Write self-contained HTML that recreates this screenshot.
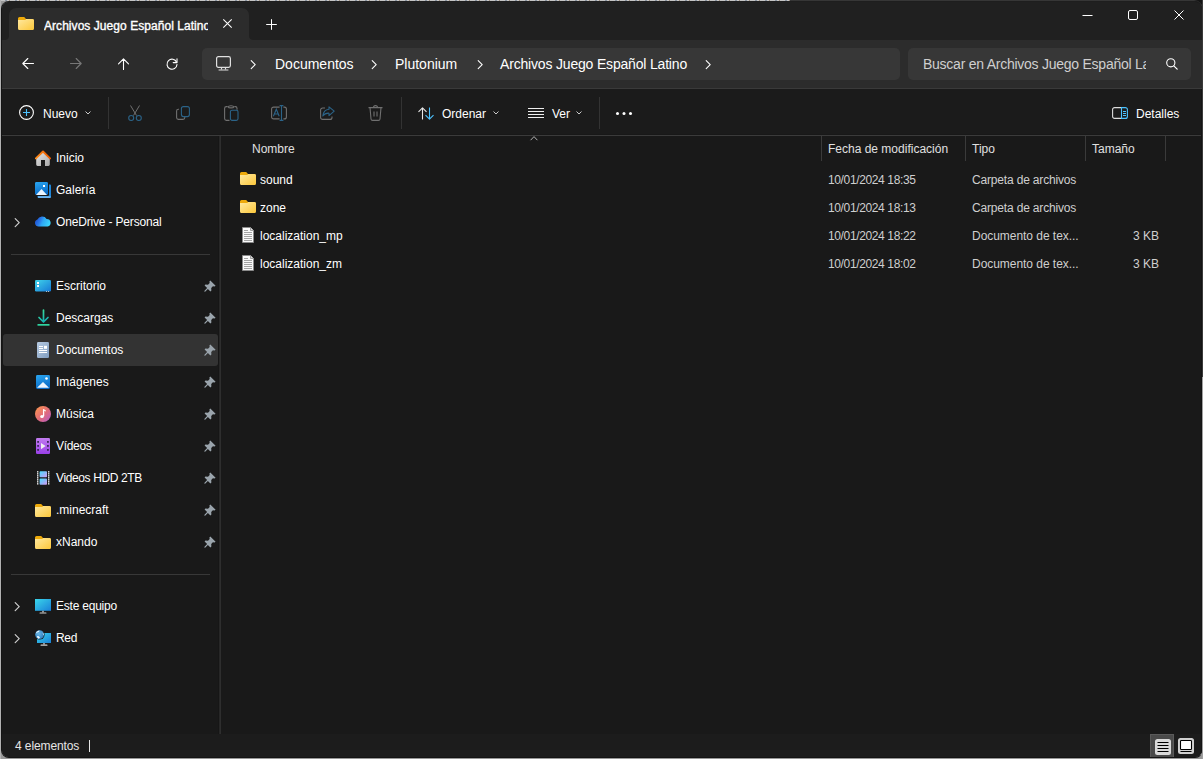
<!DOCTYPE html>
<html><head><meta charset="utf-8">
<style>
*{margin:0;padding:0;box-sizing:border-box}
html,body{width:1203px;height:759px;overflow:hidden;background:#989898;font-family:"Liberation Sans",sans-serif;color:#fff}
.a{position:absolute}
svg{position:absolute;overflow:visible}
#win{position:absolute;left:1px;top:1px;width:1202px;height:757px;border-radius:8px;overflow:hidden;background:#202020;background-clip:padding-box;border:1px solid #141414;border-top-color:#1e1e1e;border-right-color:transparent}
#pg{position:absolute;left:-2px;top:-2px;width:1203px;height:759px}
.t12{position:absolute;font-size:12px;line-height:14px;white-space:nowrap}
.t14{position:absolute;font-size:14px;line-height:16px;white-space:nowrap}
</style></head>
<body>
<div class="a" style="left:0;top:0;width:790px;height:1px;background:repeating-linear-gradient(90deg,#c4c4c4 0 5px,#8c96a4 5px 7px,#c8c8c8 7px 9px,#a09080 9px 10px)"></div>
<div class="a" style="left:790px;top:0;width:413px;height:1px;background:#363636"></div>
<div class="a" style="left:1150px;top:0;width:53px;height:30px;background:#141414"></div><div class="a" style="left:1150px;top:0;width:53px;height:30px;background:#141414;border-top:1px solid #363636;border-right:1px solid #3a3a3a;border-top-right-radius:9px"></div>
<div class="a" style="left:1202px;top:0;width:1px;height:377px;background:#3a3a3a"></div>
<div class="a" style="left:1202px;top:377px;width:1px;height:382px;background:#a0a0a0"></div>
<div class="a" style="left:0;top:0;width:1px;height:759px;background:#b2b2b2"></div>
<div id="win"><div id="pg">
<!-- title bar -->
<div class="a" style="left:0;top:0;width:1203px;height:40px;background:#202020"></div>
<!-- tab -->
<div class="a" style="left:9px;top:8px;width:240px;height:34px;background:#2c2c2c;border-radius:7px 7px 0 0"></div>
<!-- address row -->
<div class="a" style="left:0;top:40px;width:1203px;height:48px;background:#2c2c2c"></div>
<div class="a" style="left:0;top:88px;width:1203px;height:1px;background:#3a3a3a"></div>
<!-- command bar -->
<div class="a" style="left:0;top:89px;width:1203px;height:46px;background:#1b1b1b"></div>
<div class="a" style="left:0;top:134px;width:1203px;height:1px;background:#181818"></div><div class="a" style="left:0;top:135px;width:1203px;height:1px;background:#3b3b3b"></div>
<!-- body -->
<div class="a" style="left:0;top:136px;width:1203px;height:598px;background:#191919"></div>
<div class="a" style="left:218px;top:136px;width:1px;height:598px;background:#161616"></div><div class="a" style="left:219px;top:136px;width:1px;height:598px;background:#272727"></div><div class="a" style="left:220px;top:136px;width:1px;height:598px;background:#2e2e2e"></div>
<!-- status -->
<div class="a" style="left:0;top:734px;width:1203px;height:25px;background:#1c1c1c"></div>


<!-- tab flares -->
<div class="a" style="left:5px;top:36px;width:4px;height:4px;background:radial-gradient(circle 4px at 0 0,#202020 3.5px,#2c2c2c 4.5px)"></div>
<div class="a" style="left:249px;top:36px;width:4px;height:4px;background:radial-gradient(circle 4px at 100% 0,#202020 3.5px,#2c2c2c 4.5px)"></div>
<!-- tab folder icon -->
<svg style="left:18px;top:17px" width="16" height="13" viewBox="0 0 16 13">
 <defs><linearGradient id="fg" x1="0" y1="0" x2="1" y2="1"><stop offset="0" stop-color="#ffe9a0"/><stop offset="1" stop-color="#fcc73a"/></linearGradient></defs>
 <path d="M1.5 0H6.2L8 2H14.5A1.5 1.5 0 0 1 16 3.5V6H0V1.5A1.5 1.5 0 0 1 1.5 0Z" fill="#eeaa0a"/>
 <path d="M0 3H7.2L8.2 2H14.5A1.5 1.5 0 0 1 16 3.5V11.5A1.5 1.5 0 0 1 14.5 13H1.5A1.5 1.5 0 0 1 0 11.5Z" fill="url(#fg)"/>
</svg>
<div class="t12" style="left:44px;top:19px;width:164px;overflow:hidden;color:#fff;-webkit-text-stroke:0.35px #fff;letter-spacing:0.05px">Archivos Juego Español Latino</div>
<!-- tab close -->
<svg style="left:223px;top:19px" width="9" height="9" viewBox="0 0 9 9"><path d="M0.3 0.3L8.7 8.7M8.7 0.3L0.3 8.7" stroke="#fff" stroke-width="1.05"/></svg>
<!-- new tab -->
<svg style="left:266px;top:19px" width="11" height="11" viewBox="0 0 11 11"><path d="M5.5 0.2V10.8M0.2 5.5H10.8" stroke="#fff" stroke-width="1"/></svg>
<!-- window controls -->
<svg style="left:1082px;top:14px" width="11" height="3" viewBox="0 0 11 3"><path d="M0.5 1.5H10.5" stroke="#fff" stroke-width="1"/></svg>
<svg style="left:1128px;top:10px" width="10" height="10" viewBox="0 0 10 10"><rect x="0.5" y="0.5" width="9" height="9" rx="1.5" fill="none" stroke="#fff" stroke-width="1"/></svg>
<svg style="left:1174px;top:10px" width="10" height="10" viewBox="0 0 10 10"><path d="M0.5 0.5L9.5 9.5M9.5 0.5L0.5 9.5" stroke="#fff" stroke-width="1"/></svg>

<!-- nav buttons -->
<svg style="left:22px;top:58px" width="12" height="12" viewBox="0 0 12 12"><path d="M11.5 5.5H0.8M5.8 0.5L0.8 5.5L5.8 10.5" fill="none" stroke="#fff" stroke-width="1.1" stroke-linecap="round" stroke-linejoin="round"/></svg>
<svg style="left:70px;top:58px" width="12" height="12" viewBox="0 0 12 12"><path d="M0.5 5.5H11.2M6.2 0.5L11.2 5.5L6.2 10.5" fill="none" stroke="#777" stroke-width="1.1" stroke-linecap="round" stroke-linejoin="round"/></svg>
<svg style="left:118px;top:58px" width="12" height="12" viewBox="0 0 12 12"><path d="M5.5 11.5V0.8M0.5 5.8L5.5 0.8L10.5 5.8" fill="none" stroke="#fff" stroke-width="1.1" stroke-linecap="round" stroke-linejoin="round"/></svg>
<svg style="left:166px;top:58px" width="12" height="12" viewBox="0 0 12 12"><path d="M10.6 4.2A5 5 0 1 0 11 6.5" fill="none" stroke="#fff" stroke-width="1.1" stroke-linecap="round"/><path d="M11 0.8V4.6H7.2" fill="none" stroke="#fff" stroke-width="1.1" stroke-linecap="round" stroke-linejoin="round"/></svg>

<div class="a" style="left:1201px;top:89px;width:1px;height:670px;background:#141414"></div>
<!-- breadcrumb & search -->
<div class="a" style="left:202px;top:48px;width:698px;height:32px;background:#373737;border-radius:5px"></div>
<div class="a" style="left:908px;top:48px;width:283px;height:32px;background:#373737;border-radius:5px"></div>


<!-- breadcrumb contents -->
<svg style="left:216px;top:56px" width="15" height="15" viewBox="0 0 15 15"><rect x="0.6" y="0.6" width="13.8" height="10.8" rx="1.8" fill="none" stroke="#e0e0e0" stroke-width="1.2"/><path d="M5.5 11.5V13.2M9.5 11.5V13.2M2.6 14H12.4" stroke="#e0e0e0" stroke-width="1.2"/></svg>
<svg style="left:250px;top:60px" width="7" height="10" viewBox="0 0 7 10"><path d="M1.2 0.6L5.2 4.6L1.2 8.6" fill="none" stroke="#fff" stroke-width="1.1" stroke-linecap="round" stroke-linejoin="round"/></svg>
<div class="t14" style="left:275px;top:56px">Documentos</div>
<svg style="left:371px;top:60px" width="7" height="10" viewBox="0 0 7 10"><path d="M1.2 0.6L5.2 4.6L1.2 8.6" fill="none" stroke="#fff" stroke-width="1.1" stroke-linecap="round" stroke-linejoin="round"/></svg>
<div class="t14" style="left:395px;top:56px">Plutonium</div>
<svg style="left:477px;top:60px" width="7" height="10" viewBox="0 0 7 10"><path d="M1.2 0.6L5.2 4.6L1.2 8.6" fill="none" stroke="#fff" stroke-width="1.1" stroke-linecap="round" stroke-linejoin="round"/></svg>
<div class="t14" style="left:500px;top:56px;letter-spacing:-0.18px">Archivos Juego Español Latino</div>
<svg style="left:705px;top:60px" width="7" height="10" viewBox="0 0 7 10"><path d="M1.2 0.6L5.2 4.6L1.2 8.6" fill="none" stroke="#fff" stroke-width="1.1" stroke-linecap="round" stroke-linejoin="round"/></svg>
<!-- search -->
<div class="t14" style="left:923px;top:56px;width:223px;overflow:hidden;color:#cfcfcf;letter-spacing:-0.25px">Buscar en Archivos Juego Español Latino</div>
<svg style="left:1166px;top:58px" width="12" height="12" viewBox="0 0 12 12"><circle cx="4.8" cy="4.8" r="4.1" fill="none" stroke="#fff" stroke-width="1.1"/><path d="M7.8 7.8L11.2 11.2" stroke="#fff" stroke-width="1.2" stroke-linecap="round"/></svg>

<!-- command bar -->
<svg style="left:19px;top:105px" width="15" height="15" viewBox="0 0 15 15"><circle cx="7.5" cy="7.5" r="6.9" fill="none" stroke="#fff" stroke-width="1.1"/><path d="M7.5 4V11M4 7.5H11" stroke="#4cc2ff" stroke-width="1.1"/></svg>
<div class="t12" style="left:43px;top:107px">Nuevo</div>
<svg style="left:85px;top:111px" width="6" height="4" viewBox="0 0 6 4"><path d="M0.5 0.5L3 3L5.5 0.5" fill="none" stroke="#ccc" stroke-width="1"/></svg>
<div class="a" style="left:108px;top:97px;width:1px;height:32px;background:#333"></div>
<!-- cut -->
<svg style="left:128px;top:105px" width="14" height="16" viewBox="0 0 14 16"><path d="M2.5 0.5L8.5 10.5M11.5 0.5L5.5 10.5" stroke="#707070" stroke-width="1"/><circle cx="3.2" cy="13" r="2.5" fill="none" stroke="#2b6388" stroke-width="1.1"/><circle cx="10.8" cy="13" r="2.5" fill="none" stroke="#2b6388" stroke-width="1.1"/></svg>
<!-- copy -->
<svg style="left:176px;top:106px" width="14" height="14" viewBox="0 0 14 14"><path d="M3 3.2H2.4A1.8 1.8 0 0 0 0.6 5V11.6A1.8 1.8 0 0 0 2.4 13.4H7A1.8 1.8 0 0 0 8.8 11.6V11" fill="none" stroke="#707070" stroke-width="1.1"/><rect x="5.4" y="0.6" width="8" height="10" rx="2" fill="none" stroke="#2b6388" stroke-width="1.1"/></svg>
<!-- paste -->
<svg style="left:224px;top:105px" width="15" height="16" viewBox="0 0 15 16"><path d="M3.6 1.6H2.4A1.8 1.8 0 0 0 0.6 3.4V13.6A1.8 1.8 0 0 0 2.4 15.4H5.5M10.4 1.6H11.4A1.6 1.6 0 0 1 13 3.2V4.8M4.2 1.8C4.4 0.4 9.6 0.4 9.8 1.8C9.6 3.2 4.4 3.2 4.2 1.8Z" fill="none" stroke="#707070" stroke-width="1.1"/><rect x="6.4" y="5.2" width="7.6" height="10.2" rx="1.6" fill="none" stroke="#2b6388" stroke-width="1.1"/></svg>
<!-- rename -->
<svg style="left:271px;top:105px" width="16" height="16" viewBox="0 0 16 16"><path d="M8.6 2.1H2.6A2 2 0 0 0 0.6 4.1V11.9A2 2 0 0 0 2.6 13.9H8.6M12.4 2.1H13.4A2 2 0 0 1 15.4 4.1V11.9A2 2 0 0 1 13.4 13.9H12.4" fill="none" stroke="#707070" stroke-width="1.1"/><path d="M10.5 0.6V15.4M8.6 0.6H12.4M8.6 15.4H12.4M2.4 11.2L5.3 4.2L8.2 11.2M3.3 9H7.3" fill="none" stroke="#2b6388" stroke-width="1.1"/></svg>
<!-- share -->
<svg style="left:320px;top:106px" width="15" height="14" viewBox="0 0 15 14"><path d="M5 2H2.6A2 2 0 0 0 0.6 4V11.4A2 2 0 0 0 2.6 13.4H10A2 2 0 0 0 12 11.4V10.5" fill="none" stroke="#707070" stroke-width="1.1"/><path d="M9 0.8L14.2 5.2L9 9.6V7.2C6.2 7 4.2 8 2.8 10C3.2 6.5 5.5 3.6 9 3.3Z" fill="none" stroke="#2b6388" stroke-width="1.1" stroke-linejoin="round"/></svg>
<!-- delete -->
<svg style="left:368px;top:105px" width="15" height="16" viewBox="0 0 15 16"><path d="M0.5 2.6H14.5M5.5 2.6A2 2 0 0 1 9.5 2.6M2 2.6L3 14A1.6 1.6 0 0 0 4.6 15.4H10.4A1.6 1.6 0 0 0 12 14L13 2.6M6 6.5V11.5M9 6.5V11.5" fill="none" stroke="#707070" stroke-width="1.1"/></svg>
<div class="a" style="left:401px;top:97px;width:1px;height:32px;background:#333"></div>
<!-- sort -->
<svg style="left:418px;top:107px" width="16" height="13" viewBox="0 0 16 13"><path d="M4.5 12.5V0.8M0.5 4.8L4.5 0.8L8.5 4.8" fill="none" stroke="#e8e8e8" stroke-width="1.1" stroke-linejoin="round"/><path d="M11.5 0.5V12.2M7.5 8.2L11.5 12.2L15.5 8.2" fill="none" stroke="#4cc2ff" stroke-width="1.1" stroke-linejoin="round"/></svg>
<div class="t12" style="left:442px;top:107px">Ordenar</div>
<svg style="left:493px;top:111px" width="6" height="4" viewBox="0 0 6 4"><path d="M0.5 0.5L3 3L5.5 0.5" fill="none" stroke="#ccc" stroke-width="1"/></svg>
<!-- view -->
<svg style="left:528px;top:108px" width="16" height="11" viewBox="0 0 16 11"><path d="M0 0.5H16M0 3.5H16M0 6.5H16M0 9.5H16" stroke="#eee" stroke-width="1"/></svg>
<div class="t12" style="left:552px;top:107px">Ver</div>
<svg style="left:576px;top:111px" width="6" height="4" viewBox="0 0 6 4"><path d="M0.5 0.5L3 3L5.5 0.5" fill="none" stroke="#ccc" stroke-width="1"/></svg>
<div class="a" style="left:599px;top:97px;width:1px;height:32px;background:#333"></div>
<svg style="left:616px;top:112px" width="16" height="3" viewBox="0 0 16 3"><circle cx="1.5" cy="1.5" r="1.5" fill="#fff"/><circle cx="8" cy="1.5" r="1.5" fill="#fff"/><circle cx="14.5" cy="1.5" r="1.5" fill="#fff"/></svg>
<!-- details -->
<svg style="left:1112px;top:107px" width="16" height="12" viewBox="0 0 16 12"><path d="M9.5 0.6H2.6A2 2 0 0 0 0.6 2.6V9.4A2 2 0 0 0 2.6 11.4H9.5" fill="none" stroke="#ddd" stroke-width="1.1"/><path d="M9.5 0.6H13.4A2 2 0 0 1 15.4 2.6V9.4A2 2 0 0 1 13.4 11.4H9.5Z" fill="none" stroke="#4cc2ff" stroke-width="1.1"/><path d="M11 4.5H14M11 6.5H14M11 8.5H14" stroke="#4cc2ff" stroke-width="1"/></svg>
<div class="t12" style="left:1136px;top:107px">Detalles</div>


<!-- NAV PANE -->
<div class="a" style="left:3px;top:334px;width:215px;height:32px;background:#333333;border-radius:3px"></div>
<svg style="left:35px;top:150px" width="16" height="16" viewBox="0 0 16 16"><defs><linearGradient id="hb" x1="0" y1="0" x2="1" y2="1"><stop offset="0" stop-color="#e6e6e6"/><stop offset="1" stop-color="#a8a8a8"/></linearGradient><linearGradient id="hr" x1="0" y1="0" x2="1" y2="0"><stop offset="0" stop-color="#ff8c1a"/><stop offset="1" stop-color="#e85a00"/></linearGradient></defs>
<path d="M1.2 8.2L8 2.2L14.8 8.2V14.6A1.4 1.4 0 0 1 13.4 16H10V10H6V16H2.6A1.4 1.4 0 0 1 1.2 14.6Z" fill="url(#hb)"/>
<path d="M0.9 8.4L8 1.5L15.1 8.4" fill="none" stroke="url(#hr)" stroke-width="1.9" stroke-linecap="round" stroke-linejoin="round"/></svg>
<div class="t12" style="left:56px;top:151px">Inicio</div><svg style="left:35px;top:182px" width="16" height="16" viewBox="0 0 16 16"><defs><linearGradient id="gb" x1="0" y1="0" x2="0.3" y2="1"><stop offset="0" stop-color="#2aa6f0"/><stop offset="1" stop-color="#0a6cc8"/></linearGradient></defs>
<path d="M14 2.5H15A1 1 0 0 1 16 3.5V15A1 1 0 0 1 15 16H3.5A1 1 0 0 1 2.5 15V14H13A1 1 0 0 0 14 13Z" fill="#1f86d8"/>
<path d="M3 14.3H15.6V15.2A0.8 0.8 0 0 1 14.8 16H3.8A0.8 0.8 0 0 1 3 15.2Z" fill="#6fb4ee"/>
<rect x="0" y="0" width="13" height="13" rx="1.4" fill="url(#gb)"/>
<path d="M1 13L6.5 7L12 13Z" fill="#e8f4ff"/><rect x="8" y="3" width="2" height="2" fill="#fff"/></svg>
<div class="t12" style="left:56px;top:183px">Galería</div><svg style="left:14px;top:218px" width="7" height="10" viewBox="0 0 7 10"><path d="M1.2 0.6L5.2 4.6L1.2 8.6" fill="none" stroke="#d0d0d0" stroke-width="1.2" stroke-linecap="round" stroke-linejoin="round"/></svg><svg style="left:35px;top:215px" width="16" height="12" viewBox="0 0 16 12"><defs><linearGradient id="od" x1="0" y1="0.2" x2="1" y2="0.5"><stop offset="0" stop-color="#1a48c8"/><stop offset="0.35" stop-color="#2a78e8"/><stop offset="0.55" stop-color="#2ea8f4"/><stop offset="1" stop-color="#3ad4fa"/></linearGradient></defs>
<path d="M3.6 11.6A3.6 3.6 0 0 1 2.4 4.6A5.2 5.2 0 0 1 11.6 3.9A3.9 3.9 0 0 1 12.6 11.6Z" fill="url(#od)"/></svg>
<div class="t12" style="left:56px;top:215px;letter-spacing:-0.17px">OneDrive - Personal</div><div class="a" style="left:11px;top:254px;width:199px;height:1px;background:#383838"></div>
<svg style="left:35px;top:280px" width="16" height="12" viewBox="0 0 16 12"><defs><linearGradient id="dk" x1="0" y1="0" x2="1" y2="1"><stop offset="0" stop-color="#40d4ea"/><stop offset="1" stop-color="#1678d6"/></linearGradient></defs>
<rect x="0" y="0" width="16" height="11.5" rx="1.3" fill="url(#dk)"/><rect x="2" y="2" width="2" height="2" fill="#fff"/><rect x="2" y="5" width="2" height="2" fill="#fff"/><rect x="11" y="11.2" width="1" height="0.8" fill="#ddd"/><rect x="13" y="11.2" width="1" height="0.8" fill="#ddd"/></svg>
<div class="t12" style="left:56px;top:279px">Escritorio</div><svg style="left:204px;top:280px" width="12" height="12" viewBox="0 0 12 12"><path d="M6.3 0.4L11.6 5.7L10.6 6.6L8.9 6.3L7.2 8L7.4 10.6L6.4 11.4L3.9 8.9L1.1 11.7L0.3 11.6L0.3 10.9L3.1 8.1L0.6 5.6L1.4 4.6L4 4.8L5.7 3.1L5.4 1.4Z" fill="#9aa4ac"/></svg><svg style="left:37px;top:309px" width="13" height="17" viewBox="0 0 13 17"><defs><linearGradient id="dl" x1="0" y1="0" x2="0.4" y2="1"><stop offset="0" stop-color="#3fe39a"/><stop offset="1" stop-color="#16b0b0"/></linearGradient></defs>
<path d="M6.5 1V12.5M2 8.5L6.5 13L11 8.5" fill="none" stroke="url(#dl)" stroke-width="1.7" stroke-linecap="round" stroke-linejoin="round"/><rect x="0.5" y="15" width="12" height="1.7" fill="#2fd3a0"/></svg>
<div class="t12" style="left:56px;top:311px">Descargas</div><svg style="left:204px;top:312px" width="12" height="12" viewBox="0 0 12 12"><path d="M6.3 0.4L11.6 5.7L10.6 6.6L8.9 6.3L7.2 8L7.4 10.6L6.4 11.4L3.9 8.9L1.1 11.7L0.3 11.6L0.3 10.9L3.1 8.1L0.6 5.6L1.4 4.6L4 4.8L5.7 3.1L5.4 1.4Z" fill="#9aa4ac"/></svg><svg style="left:37px;top:342px" width="12" height="16" viewBox="0 0 12 16"><defs><linearGradient id="dc" x1="0" y1="0" x2="1" y2="1"><stop offset="0" stop-color="#b8cbe2"/><stop offset="1" stop-color="#7f9dc0"/></linearGradient></defs>
<rect x="0" y="0" width="12" height="16" rx="1.2" fill="url(#dc)"/><path d="M2 4.5H6M2 6.5H6M2 8.5H10M2 10.5H10" stroke="#fff" stroke-width="1"/><rect x="7" y="3.8" width="3" height="3" fill="#fff"/></svg>
<div class="t12" style="left:56px;top:343px">Documentos</div><svg style="left:204px;top:344px" width="12" height="12" viewBox="0 0 12 12"><path d="M6.3 0.4L11.6 5.7L10.6 6.6L8.9 6.3L7.2 8L7.4 10.6L6.4 11.4L3.9 8.9L1.1 11.7L0.3 11.6L0.3 10.9L3.1 8.1L0.6 5.6L1.4 4.6L4 4.8L5.7 3.1L5.4 1.4Z" fill="#9aa4ac"/></svg><svg style="left:36px;top:375px" width="14" height="14" viewBox="0 0 14 14"><defs><linearGradient id="im" x1="0" y1="0" x2="0.3" y2="1"><stop offset="0" stop-color="#2aa6f0"/><stop offset="1" stop-color="#0a6cc8"/></linearGradient></defs>
<rect x="0" y="0" width="14" height="14" rx="1.4" fill="url(#im)"/><path d="M1 12.8L7 7L13 12.8Z" fill="#eaf5ff"/><circle cx="10.5" cy="3.5" r="1.3" fill="#fff"/></svg>
<div class="t12" style="left:56px;top:375px">Imágenes</div><svg style="left:204px;top:376px" width="12" height="12" viewBox="0 0 12 12"><path d="M6.3 0.4L11.6 5.7L10.6 6.6L8.9 6.3L7.2 8L7.4 10.6L6.4 11.4L3.9 8.9L1.1 11.7L0.3 11.6L0.3 10.9L3.1 8.1L0.6 5.6L1.4 4.6L4 4.8L5.7 3.1L5.4 1.4Z" fill="#9aa4ac"/></svg><svg style="left:35px;top:406px" width="16" height="16" viewBox="0 0 16 16"><defs><linearGradient id="mu" x1="0" y1="0" x2="1" y2="1"><stop offset="0" stop-color="#ff9a4a"/><stop offset="0.55" stop-color="#e06a7a"/><stop offset="1" stop-color="#b05ad0"/></linearGradient></defs>
<circle cx="8" cy="8" r="8" fill="url(#mu)"/><path d="M8.6 3.2V10.2" stroke="#fff" stroke-width="1.3"/><path d="M8.6 3.2L10.9 4.4V5.6L8.6 4.6Z" fill="#fff"/><ellipse cx="7" cy="10.6" rx="1.8" ry="1.5" fill="#fff"/></svg>
<div class="t12" style="left:56px;top:407px">Música</div><svg style="left:204px;top:408px" width="12" height="12" viewBox="0 0 12 12"><path d="M6.3 0.4L11.6 5.7L10.6 6.6L8.9 6.3L7.2 8L7.4 10.6L6.4 11.4L3.9 8.9L1.1 11.7L0.3 11.6L0.3 10.9L3.1 8.1L0.6 5.6L1.4 4.6L4 4.8L5.7 3.1L5.4 1.4Z" fill="#9aa4ac"/></svg><svg style="left:36px;top:438px" width="14" height="16" viewBox="0 0 14 16"><defs><linearGradient id="vi" x1="0" y1="0" x2="0" y2="1"><stop offset="0" stop-color="#c27cf0"/><stop offset="1" stop-color="#9a40e8"/></linearGradient></defs>
<rect x="0" y="0" width="14" height="16" rx="1.2" fill="url(#vi)"/><rect x="1.2" y="3" width="1.8" height="1.8" fill="#3a2a58"/><rect x="1.2" y="7" width="1.8" height="1.8" fill="#3a2a58"/><rect x="1.2" y="11" width="1.8" height="1.8" fill="#3a2a58"/><rect x="11" y="3" width="1.8" height="1.8" fill="#3a2a58"/><rect x="11" y="7" width="1.8" height="1.8" fill="#3a2a58"/><rect x="11" y="11" width="1.8" height="1.8" fill="#3a2a58"/><path d="M5 5L9.6 8L5 11.2Z" fill="#f0f0f0"/></svg>
<div class="t12" style="left:56px;top:439px;letter-spacing:-0.3px">Vídeos</div><svg style="left:204px;top:440px" width="12" height="12" viewBox="0 0 12 12"><path d="M6.3 0.4L11.6 5.7L10.6 6.6L8.9 6.3L7.2 8L7.4 10.6L6.4 11.4L3.9 8.9L1.1 11.7L0.3 11.6L0.3 10.9L3.1 8.1L0.6 5.6L1.4 4.6L4 4.8L5.7 3.1L5.4 1.4Z" fill="#9aa4ac"/></svg><svg style="left:37px;top:471px" width="13" height="14" viewBox="0 0 13 14"><defs><linearGradient id="fs" x1="0" y1="0" x2="1" y2="1"><stop offset="0" stop-color="#4ae0ff"/><stop offset="0.5" stop-color="#8ab8f8"/><stop offset="1" stop-color="#d69af0"/></linearGradient></defs>
<rect x="0" y="0.2" width="1.4" height="1.3" fill="#fff"/><rect x="11" y="0.2" width="1.4" height="1.3" fill="#fff"/><rect x="0" y="2.2" width="1.4" height="1.3" fill="#fff"/><rect x="11" y="2.2" width="1.4" height="1.3" fill="#fff"/><rect x="0" y="4.2" width="1.4" height="1.3" fill="#fff"/><rect x="11" y="4.2" width="1.4" height="1.3" fill="#fff"/><rect x="0" y="6.2" width="1.4" height="1.3" fill="#fff"/><rect x="11" y="6.2" width="1.4" height="1.3" fill="#fff"/><rect x="0" y="8.2" width="1.4" height="1.3" fill="#fff"/><rect x="11" y="8.2" width="1.4" height="1.3" fill="#fff"/><rect x="0" y="10.2" width="1.4" height="1.3" fill="#fff"/><rect x="11" y="10.2" width="1.4" height="1.3" fill="#fff"/><rect x="0" y="12.2" width="1.4" height="1.3" fill="#fff"/><rect x="11" y="12.2" width="1.4" height="1.3" fill="#fff"/><rect x="2.6" y="0.3" width="7.4" height="6" rx="0.8" fill="url(#fs)"/><rect x="2.6" y="7.6" width="7.4" height="6.2" rx="0.8" fill="url(#fs)"/></svg>
<div class="t12" style="left:56px;top:471px;letter-spacing:-0.38px">Videos HDD 2TB</div><svg style="left:204px;top:472px" width="12" height="12" viewBox="0 0 12 12"><path d="M6.3 0.4L11.6 5.7L10.6 6.6L8.9 6.3L7.2 8L7.4 10.6L6.4 11.4L3.9 8.9L1.1 11.7L0.3 11.6L0.3 10.9L3.1 8.1L0.6 5.6L1.4 4.6L4 4.8L5.7 3.1L5.4 1.4Z" fill="#9aa4ac"/></svg><svg style="left:35px;top:504px" width="16" height="13" viewBox="0 0 16 13"><path d="M1.5 0H6.2L8 2H14.5A1.5 1.5 0 0 1 16 3.5V6H0V1.5A1.5 1.5 0 0 1 1.5 0Z" fill="#eeaa0a"/><path d="M0 3H7.2L8.2 2H14.5A1.5 1.5 0 0 1 16 3.5V11.5A1.5 1.5 0 0 1 14.5 13H1.5A1.5 1.5 0 0 1 0 11.5Z" fill="url(#fg)"/></svg><div class="t12" style="left:56px;top:503px">.minecraft</div><svg style="left:204px;top:504px" width="12" height="12" viewBox="0 0 12 12"><path d="M6.3 0.4L11.6 5.7L10.6 6.6L8.9 6.3L7.2 8L7.4 10.6L6.4 11.4L3.9 8.9L1.1 11.7L0.3 11.6L0.3 10.9L3.1 8.1L0.6 5.6L1.4 4.6L4 4.8L5.7 3.1L5.4 1.4Z" fill="#9aa4ac"/></svg><svg style="left:35px;top:536px" width="16" height="13" viewBox="0 0 16 13"><path d="M1.5 0H6.2L8 2H14.5A1.5 1.5 0 0 1 16 3.5V6H0V1.5A1.5 1.5 0 0 1 1.5 0Z" fill="#eeaa0a"/><path d="M0 3H7.2L8.2 2H14.5A1.5 1.5 0 0 1 16 3.5V11.5A1.5 1.5 0 0 1 14.5 13H1.5A1.5 1.5 0 0 1 0 11.5Z" fill="url(#fg)"/></svg><div class="t12" style="left:56px;top:535px">xNando</div><svg style="left:204px;top:536px" width="12" height="12" viewBox="0 0 12 12"><path d="M6.3 0.4L11.6 5.7L10.6 6.6L8.9 6.3L7.2 8L7.4 10.6L6.4 11.4L3.9 8.9L1.1 11.7L0.3 11.6L0.3 10.9L3.1 8.1L0.6 5.6L1.4 4.6L4 4.8L5.7 3.1L5.4 1.4Z" fill="#9aa4ac"/></svg><div class="a" style="left:11px;top:574px;width:199px;height:1px;background:#383838"></div>
<svg style="left:14px;top:602px" width="7" height="10" viewBox="0 0 7 10"><path d="M1.2 0.6L5.2 4.6L1.2 8.6" fill="none" stroke="#d0d0d0" stroke-width="1.2" stroke-linecap="round" stroke-linejoin="round"/></svg><svg style="left:35px;top:599px" width="16" height="15" viewBox="0 0 16 15"><defs><linearGradient id="pc" x1="0" y1="0" x2="1" y2="1"><stop offset="0" stop-color="#3ad6ea"/><stop offset="1" stop-color="#1a80d8"/></linearGradient></defs>
<rect x="0" y="0" width="16" height="11.8" fill="url(#pc)"/><rect x="7.3" y="11.8" width="1.4" height="1.6" fill="#c8c8c8"/><rect x="4.5" y="13.4" width="7" height="1.2" rx="0.6" fill="#d0d0d0"/></svg>
<div class="t12" style="left:56px;top:599px;letter-spacing:-0.22px">Este equipo</div><svg style="left:14px;top:634px" width="7" height="10" viewBox="0 0 7 10"><path d="M1.2 0.6L5.2 4.6L1.2 8.6" fill="none" stroke="#d0d0d0" stroke-width="1.2" stroke-linecap="round" stroke-linejoin="round"/></svg><svg style="left:35px;top:630px" width="16" height="16" viewBox="0 0 16 16"><defs><radialGradient id="gl" cx="0.4" cy="0.4" r="0.7"><stop offset="0" stop-color="#6ab8e8"/><stop offset="1" stop-color="#2a78b8"/></radialGradient></defs>
<rect x="2" y="3" width="14" height="10" fill="url(#pc)"/><rect x="8.3" y="13" width="1.4" height="1.6" fill="#c8c8c8"/><rect x="5.5" y="14.6" width="7" height="1.2" rx="0.6" fill="#d0d0d0"/>
<circle cx="4.6" cy="4.6" r="5" fill="#1b1b1b"/><circle cx="4.6" cy="4.6" r="4.4" fill="url(#gl)"/><path d="M1 3.2C1.6 1.6 3 0.6 4.4 0.6C4.8 1.6 3.6 2.4 2.4 2.6C1.8 3.2 1.4 3.6 1 3.2Z" fill="#e8f6ff"/><path d="M2 6.2C3 5.8 4.4 6.4 5 7.6C4.6 8.4 3.8 8.8 3 8.6C2.4 7.8 2 7 2 6.2Z" fill="#e8f6ff"/><path d="M7.6 2.6C8.4 3.2 8.9 4.2 9 5.2C8.4 5.2 7.8 4.4 7.6 2.6Z" fill="#d8f0ff"/></svg>
<div class="t12" style="left:56px;top:631px;letter-spacing:-0.35px">Red</div>

<!-- CONTENT -->
<svg style="left:530px;top:136px" width="8" height="5" viewBox="0 0 8 5"><path d="M0.6 4.2L4 0.6L7.4 4.2" fill="none" stroke="#b0b0b0" stroke-width="1"/></svg>
<div class="t12" style="left:252px;top:142px;color:#e0e0e0">Nombre</div>
<div class="a" style="left:821px;top:136px;width:1px;height:25px;background:#3a3a3a"></div>
<div class="a" style="left:965px;top:136px;width:1px;height:25px;background:#3a3a3a"></div>
<div class="a" style="left:1085px;top:136px;width:1px;height:25px;background:#3a3a3a"></div>
<div class="a" style="left:1165px;top:136px;width:1px;height:25px;background:#3a3a3a"></div>
<div class="t12" style="left:828px;top:142px;color:#e0e0e0">Fecha de modificación</div>
<div class="t12" style="left:972px;top:142px;color:#e0e0e0">Tipo</div>
<div class="t12" style="left:1092px;top:142px;color:#e0e0e0">Tamaño</div>
<svg style="left:240px;top:172px" width="16" height="13" viewBox="0 0 16 13"><path d="M1.5 0H6.2L8 2H14.5A1.5 1.5 0 0 1 16 3.5V6H0V1.5A1.5 1.5 0 0 1 1.5 0Z" fill="#eeaa0a"/><path d="M0 3H7.2L8.2 2H14.5A1.5 1.5 0 0 1 16 3.5V11.5A1.5 1.5 0 0 1 14.5 13H1.5A1.5 1.5 0 0 1 0 11.5Z" fill="url(#fg)"/></svg><div class="t12" style="left:260px;top:173px">sound</div>
<div class="t12" style="left:828px;top:173px;color:#cfcfcf;letter-spacing:-0.37px">10/01/2024 18:35</div>
<div class="t12" style="left:972px;top:173px;color:#cfcfcf;letter-spacing:-0.17px">Carpeta de archivos</div>
<svg style="left:240px;top:200px" width="16" height="13" viewBox="0 0 16 13"><path d="M1.5 0H6.2L8 2H14.5A1.5 1.5 0 0 1 16 3.5V6H0V1.5A1.5 1.5 0 0 1 1.5 0Z" fill="#eeaa0a"/><path d="M0 3H7.2L8.2 2H14.5A1.5 1.5 0 0 1 16 3.5V11.5A1.5 1.5 0 0 1 14.5 13H1.5A1.5 1.5 0 0 1 0 11.5Z" fill="url(#fg)"/></svg><div class="t12" style="left:260px;top:201px">zone</div>
<div class="t12" style="left:828px;top:201px;color:#cfcfcf;letter-spacing:-0.37px">10/01/2024 18:13</div>
<div class="t12" style="left:972px;top:201px;color:#cfcfcf;letter-spacing:-0.17px">Carpeta de archivos</div>
<svg style="left:242px;top:227px" width="12" height="16" viewBox="0 0 12 16"><path d="M0.5 0.5H8.5L11.5 3.5V15.5H0.5Z" fill="#fafafa" stroke="#8a8a8a" stroke-width="1"/><path d="M8.5 0.5V3.5H11.5" fill="#ddd" stroke="#8a8a8a" stroke-width="0.8"/><path d="M2 3.5H6M2 5.5H10M2 7.5H10M2 9.5H10M2 11.5H10M2 13.5H10" stroke="#9a9a9a" stroke-width="0.9"/></svg><div class="t12" style="left:260px;top:229px">localization_mp</div>
<div class="t12" style="left:828px;top:229px;color:#cfcfcf;letter-spacing:-0.37px">10/01/2024 18:22</div>
<div class="t12" style="left:972px;top:229px;color:#cfcfcf;letter-spacing:-0.04px">Documento de tex...</div>
<div class="t12" style="left:1101px;width:58px;text-align:right;top:229px;color:#cfcfcf">3 KB</div>
<svg style="left:242px;top:255px" width="12" height="16" viewBox="0 0 12 16"><path d="M0.5 0.5H8.5L11.5 3.5V15.5H0.5Z" fill="#fafafa" stroke="#8a8a8a" stroke-width="1"/><path d="M8.5 0.5V3.5H11.5" fill="#ddd" stroke="#8a8a8a" stroke-width="0.8"/><path d="M2 3.5H6M2 5.5H10M2 7.5H10M2 9.5H10M2 11.5H10M2 13.5H10" stroke="#9a9a9a" stroke-width="0.9"/></svg><div class="t12" style="left:260px;top:257px">localization_zm</div>
<div class="t12" style="left:828px;top:257px;color:#cfcfcf;letter-spacing:-0.37px">10/01/2024 18:02</div>
<div class="t12" style="left:972px;top:257px;color:#cfcfcf;letter-spacing:-0.04px">Documento de tex...</div>
<div class="t12" style="left:1101px;width:58px;text-align:right;top:257px;color:#cfcfcf">3 KB</div>
<div class="t12" style="left:15px;top:739px;color:#e6e6e6;letter-spacing:-0.1px">4 elementos</div>
<div class="a" style="left:89px;top:740px;width:1px;height:12px;background:#e6e6e6"></div>
<div class="a" style="left:1150px;top:734px;width:24px;height:24px;background:#4a4a4a;border:1px solid #5a5a5a"></div>
<svg style="left:1155px;top:739px" width="16" height="16" viewBox="0 0 16 16"><rect x="0" y="0" width="16" height="16" rx="2.5" fill="#dadada"/><path d="M2.5 3.5H13.5M2.5 6.5H13.5M2.5 9.5H13.5M2.5 12.5H13.5" stroke="#000" stroke-width="1.1"/></svg>
<svg style="left:1178px;top:738px" width="16" height="16" viewBox="0 0 16 16"><rect x="0" y="0" width="16" height="16" rx="2.5" fill="#d0d0d0"/><rect x="2.5" y="2.5" width="11" height="9" rx="0.8" fill="#fff" stroke="#000" stroke-width="1.1"/><path d="M2.5 13.5H13.5" stroke="#000" stroke-width="1"/></svg>

</div></div>
</body></html>
